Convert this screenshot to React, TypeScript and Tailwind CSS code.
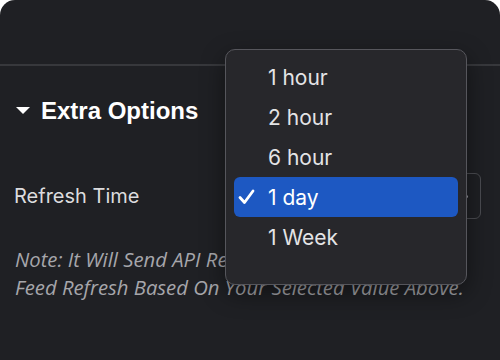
import React from 'react';

const options = ['1 hour', '2 hour', '6 hour', '1 day', '1 Week'];

function Dropdown({ selected }: { selected: string }) {
  return (
    <div className="absolute left-[225px] top-[49px] w-[242px] h-[236px] rounded-[10px] border border-[#56565c] bg-[#27272b] shadow-[0_8px_24px_rgba(0,0,0,0.45)] px-[8px] pt-[7px]">
      {options.map((opt) => {
        const active = opt === selected;
        return (
          <div
            key={opt}
            className={
              active
                ? 'relative flex h-[40px] items-center rounded-[6px] bg-[#1d58c2] pl-[34px] text-white'
                : 'relative flex h-[40px] items-center pl-[34px] text-[#e4e4e6]'
            }
          >
            {active && (
              <svg className="absolute left-[4px] top-[12px]" width="17" height="16" viewBox="0 0 17 16" fill="none">
                <path d="M2 8.5 L6.5 13.5 L15 2" stroke="white" strokeWidth="2.8" strokeLinecap="round" strokeLinejoin="round" />
              </svg>
            )}
            <span className="text-[21px] font-['Inter',sans-serif] leading-none">{opt}</span>
          </div>
        );
      })}
    </div>
  );
}

export default function App() {
  return (
    <div className="w-[500px] h-[360px] bg-white">
      <div className="relative w-full h-full rounded-t-[15px] bg-[#1f2024] overflow-hidden">
        {/* top bar */}
        <div className="h-[66px] border-b-2 border-[#37383c]" />

        <div className="px-[15px]">
          <div className="flex items-center mt-[32px] h-[26px]">
            <svg className="ml-[1px]" width="14" height="8" viewBox="0 0 14 8">
              <polygon points="0,0 14,0 7,7" fill="white" />
            </svg>
            <span className="ml-[11px] text-[24px] font-bold text-white font-['Liberation_Sans',Arial,sans-serif] leading-none">
              Extra Options
            </span>
          </div>

          <div className="flex items-center justify-between mt-[49px] h-[46px]">
            <span className="-ml-[1px] text-[20px] text-[#dcdcde] font-['Inter',sans-serif]">Refresh Time</span>
            <div className="relative w-[253px] h-[46px] mr-[4px] rounded-[6px] border border-[#4b4c51] bg-[#1f2024]">
              <span className="absolute right-[12px] top-[21px] h-[3px] w-[3px] rounded-full bg-[#9a9aa0]" />
            </div>
          </div>

          <p className="mt-[26px] whitespace-nowrap text-[20.3px] italic leading-[28px] text-[#a6a6ab] font-['Open_Sans',sans-serif]">
            Note: It Will Send API Request To Server On Every
            <br />
            Feed Refresh Based On Your Selected Value Above.
          </p>
        </div>

        <Dropdown selected="1 day" />
      </div>
    </div>
  );
}
